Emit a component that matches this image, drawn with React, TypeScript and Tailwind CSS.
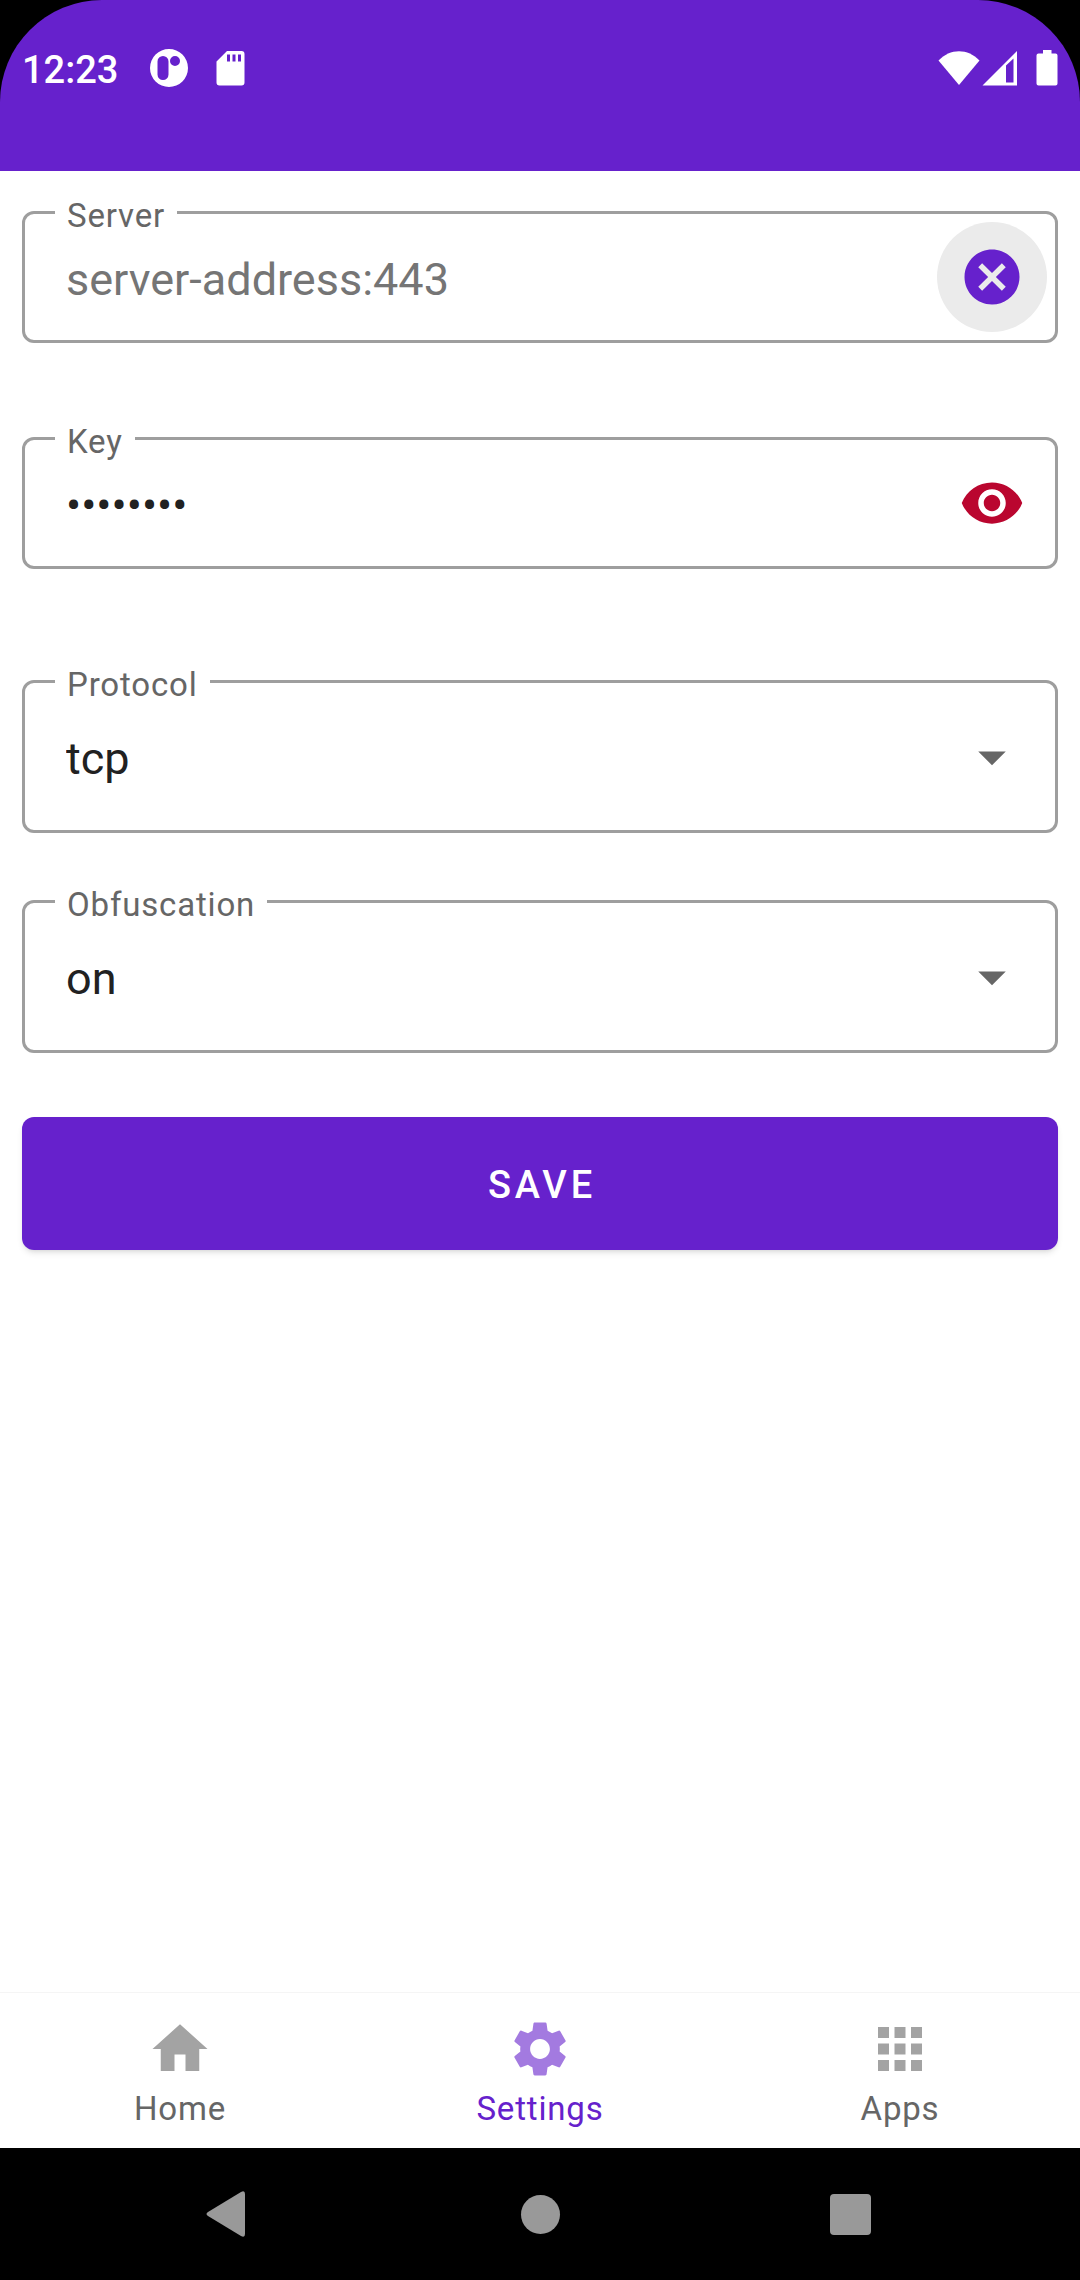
import { useState } from "react";
import type { ReactNode } from "react";
import {
  MdApps,
  MdArrowDropDown,
  MdCancel,
  MdHome,
  MdSettings,
  MdVisibility,
} from "react-icons/md";

const tabs = [
  { id: "home", label: "Home", Icon: MdHome },
  { id: "settings", label: "Settings", Icon: MdSettings },
  { id: "apps", label: "Apps", Icon: MdApps },
];

function StatusBar() {
  return (
    <header className="bg-black">
      <div className="rounded-t-[102px] bg-[#6621cc] pb-9 text-white">
        <div className="flex h-[135px] items-center justify-between px-[22px]">
          <div className="flex items-center">
            <span className="pt-1 text-[38px] leading-[44px] font-medium">12:23</span>
            <svg className="ml-8 size-[38px]" viewBox="0 0 38 38" fill="currentColor">
              <path
                fillRule="evenodd"
                d="M19 0a19 19 0 1 1 0 38a19 19 0 1 1 0-38zM13 7a5.500 5.500 0 0 0-5.500 5.500v13a5.500 5.500 0 0 0 11 0v-13A5.500 5.500 0 0 0 13 7zM25 7a5 5 0 1 0 0 10a5 5 0 1 0 0-10z"
              />
            </svg>
            <svg className="ml-7 h-[36px] w-[30px]" viewBox="0 0 30 36" fill="currentColor">
              <path
                fillRule="evenodd"
                d="M11 1h14.500a3 3 0 0 1 3 3v28.500a3 3 0 0 1-3 3h-22a3 3 0 0 1-3-3V11.500zM11 4.500v7h3v-7zM16.500 4.500v7h3v-7zM22 4.500v7h3v-7z"
              />
            </svg>
          </div>
          <div className="flex items-center">
            <svg className="h-[36px] w-[42px]" viewBox="0 0 42 36" fill="currentColor">
              <path d="M0.500 10.500C12 -2 30 -2 41.500 10.500L21 35z" />
            </svg>
            <svg className="ml-0.5 size-[36px]" viewBox="0 0 36 36" fill="currentColor">
              <path fillRule="evenodd" d="M0.500 35.500L35 1v34.500zM24 15.500v17h7.500v-24z" />
            </svg>
            <svg className="ml-[18px] h-[36px] w-[22px]" viewBox="0 0 22 36" fill="currentColor">
              <path d="M7 0h8.500v3.500H19.500a2 2 0 0 1 2 2v28a2 2 0 0 1-2 2h-17a2 2 0 0 1-2-2v-28a2 2 0 0 1 2-2H7z" />
            </svg>
          </div>
        </div>
      </div>
    </header>
  );
}

type FieldProps = {
  id: string;
  label: string;
  className: string;
  children: ReactNode;
};

// outlined text field, the label sits over the top border
function Field({ id, label, className, children }: FieldProps) {
  return (
    <div className={`relative flex items-center rounded-xl border-3 border-[#9e9e9e] ${className}`}>
      <label
        htmlFor={id}
        className="absolute -top-4.5 left-[30px] bg-white px-3 text-[33px] leading-[40px] tracking-wide text-[#666]"
      >
        {label}
      </label>
      {children}
    </div>
  );
}

type SelectFieldProps = {
  id: string;
  label: string;
  options: string[];
  className: string;
};

function SelectField({ id, label, options, className }: SelectFieldProps) {
  const [value, setValue] = useState(options[0]);

  return (
    <Field id={id} label={label} className={`h-[153px] ${className}`}>
      <select
        id={id}
        value={value}
        onChange={(e) => setValue(e.target.value)}
        className="h-full w-full appearance-none rounded-xl pt-1 pl-[41px] text-[45px] text-[#212121] outline-none"
      >
        {options.map((o) => (
          <option key={o}>{o}</option>
        ))}
      </select>
      <MdArrowDropDown className="pointer-events-none absolute right-[30px] size-[66px] text-[#666]" />
    </Field>
  );
}

export default function App() {
  const [server, setServer] = useState("");
  const [key, setKey] = useState("password");
  const [showKey, setShowKey] = useState(false);
  const [tab, setTab] = useState("settings");

  return (
    <div className="flex min-h-screen flex-col bg-white font-[Roboto,sans-serif]">
      <StatusBar />

      <main className="flex flex-1 flex-col px-[22px] pt-10">
        <Field id="server" label="Server" className="h-[132px]">
          <input
            id="server"
            value={server}
            onChange={(e) => setServer(e.target.value)}
            placeholder="server-address:443"
            className="h-full min-w-0 flex-1 pt-1 pl-[41px] text-[45px] text-[#212121] outline-none placeholder:text-[#757575]"
          />
          <button
            type="button"
            aria-label="Clear server"
            onClick={() => setServer("")}
            className="mr-2 flex size-[110px] shrink-0 items-center justify-center rounded-full bg-[#ebebeb] text-[#6621cc]"
          >
            <MdCancel className="size-[66px]" />
          </button>
        </Field>

        <Field id="key" label="Key" className="mt-[94px] h-[132px]">
          <input
            id="key"
            type={showKey ? "text" : "password"}
            value={key}
            onChange={(e) => setKey(e.target.value)}
            className="h-full min-w-0 flex-1 pt-1 pl-[41px] text-[45px] text-[#212121] outline-none"
          />
          <button
            type="button"
            aria-label="Show key"
            onClick={() => setShowKey(!showKey)}
            className="mr-2 flex size-[110px] shrink-0 items-center justify-center rounded-full text-[#ba062f]"
          >
            <MdVisibility className="size-[66px]" />
          </button>
        </Field>

        <SelectField id="protocol" label="Protocol" options={["tcp", "udp"]} className="mt-[111px]" />
        <SelectField id="obfuscation" label="Obfuscation" options={["on", "off"]} className="mt-[67px]" />

        <button
          type="button"
          className="mt-16 h-[133px] rounded-xl bg-[#6621cc] pt-1 pl-1 text-[38px] font-medium tracking-widest text-white shadow-md"
        >
          SAVE
        </button>
      </main>

      <nav className="flex border-t border-[#f5f5f5]">
        {tabs.map(({ id, label, Icon }) => (
          <button
            key={id}
            type="button"
            onClick={() => setTab(id)}
            className={`flex flex-1 flex-col items-center gap-[7px] pt-[23px] pb-[19px] text-[33px] leading-[40px] tracking-wide ${
              tab === id ? "text-[#6621cc]" : "text-[#666]"
            }`}
          >
            <Icon className={`size-[66px] ${tab === id ? "text-[#a37ae0]" : "text-[#a3a3a3]"}`} />
            {label}
          </button>
        ))}
      </nav>

      {/* system navigation */}
      <div className="flex h-[132px] bg-black px-[70px] text-[#999]">
        <button type="button" aria-label="Back" className="flex flex-1 items-center justify-center">
          <svg className="size-[48px]" viewBox="0 0 48 48" fill="currentColor">
            <path d="M5 22L38 2Q42 0 42 4v40Q42 48 38 46L5 26Q2 24 5 22z" />
          </svg>
        </button>
        <button type="button" aria-label="Home screen" className="flex flex-1 items-center justify-center">
          <svg className="size-[48px]" viewBox="0 0 48 48" fill="currentColor">
            <circle cx="24.500" cy="24.500" r="19.500" />
          </svg>
        </button>
        <button type="button" aria-label="Recent apps" className="flex flex-1 items-center justify-center">
          <svg className="size-[48px]" viewBox="0 0 48 48" fill="currentColor">
            <rect x="1" y="4" width="41" height="41" rx="4" />
          </svg>
        </button>
      </div>
    </div>
  );
}
